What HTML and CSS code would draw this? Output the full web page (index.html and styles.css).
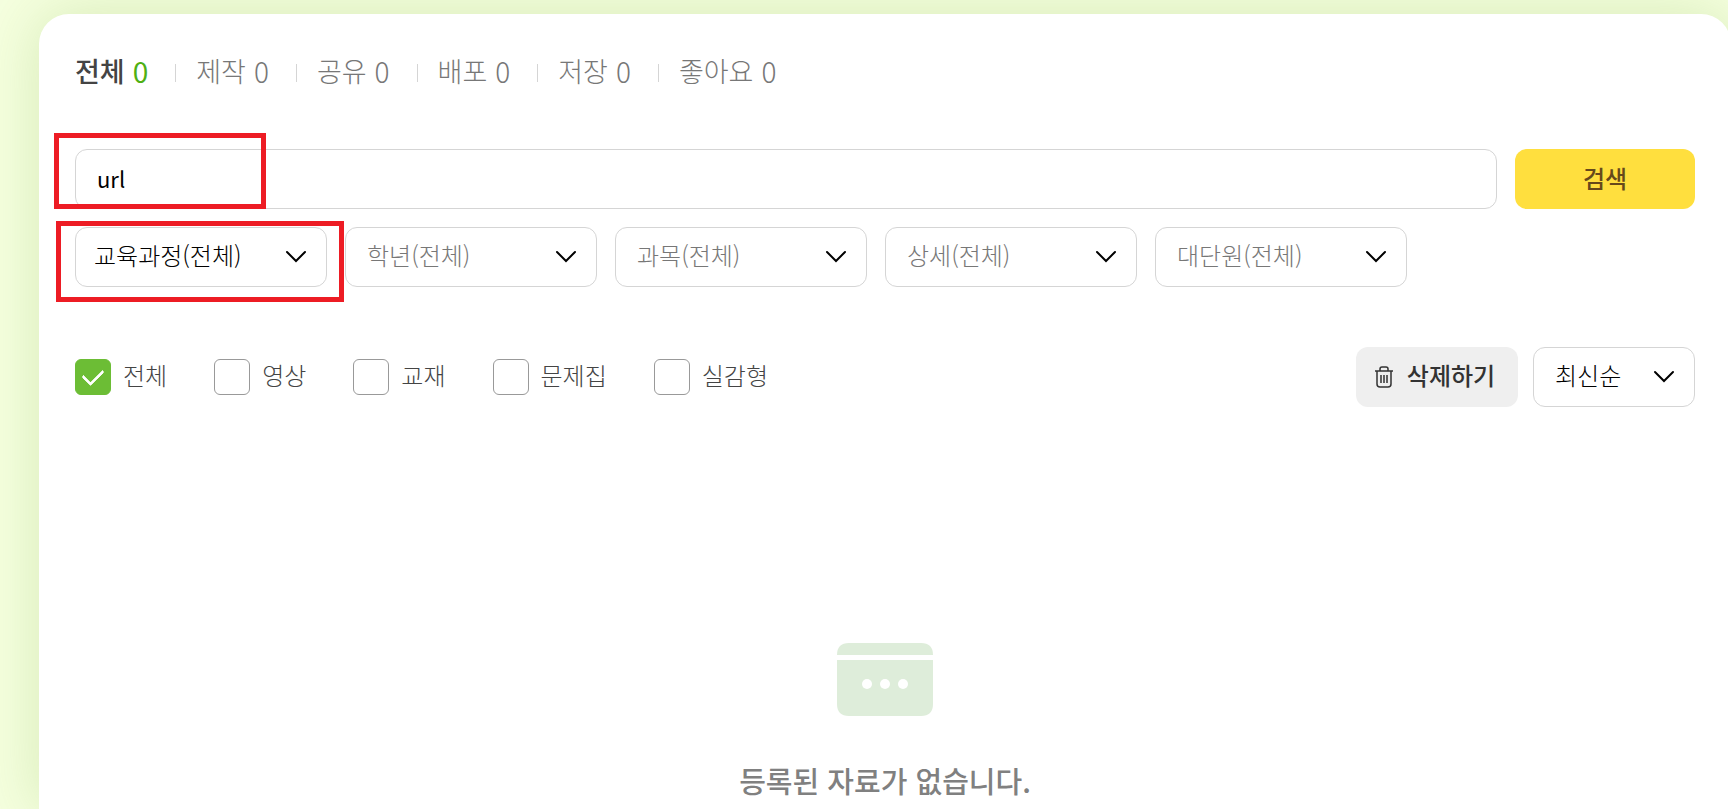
FILE: index.html
```html
<!DOCTYPE html>
<html lang="ko">
<head>
    <meta charset="UTF-8">
    <meta name="viewport" content="width=device-width, initial-scale=1.0">
    <title>자료 보관함</title>
    <link rel="stylesheet" href="styles.css">
</head>
<body>
    <main class="panel">
        <nav class="tabs">
            <a href="#" class="tab active">전체 <span class="count">0</span></a>
            <a href="#" class="tab">제작 <span class="count">0</span></a>
            <a href="#" class="tab">공유 <span class="count">0</span></a>
            <a href="#" class="tab">배포 <span class="count">0</span></a>
            <a href="#" class="tab">저장 <span class="count">0</span></a>
            <a href="#" class="tab">좋아요 <span class="count">0</span></a>
        </nav>

        <form class="search">
            <input type="text" class="search-input" value="url" aria-label="검색어">
            <button type="button" class="btn btn-search">검색</button>
            <span class="mark mark-keyword"></span>
        </form>

        <div class="filters">
            <div class="select-box current">
                <select aria-label="교육과정"><option>교육과정(전체)</option></select>
                <svg class="arrow" viewBox="0 0 22 14"><path d="M2 2l9 9 9-9"/></svg>
            </div>
            <div class="select-box">
                <select aria-label="학년"><option>학년(전체)</option></select>
                <svg class="arrow" viewBox="0 0 22 14"><path d="M2 2l9 9 9-9"/></svg>
            </div>
            <div class="select-box">
                <select aria-label="과목"><option>과목(전체)</option></select>
                <svg class="arrow" viewBox="0 0 22 14"><path d="M2 2l9 9 9-9"/></svg>
            </div>
            <div class="select-box">
                <select aria-label="상세"><option>상세(전체)</option></select>
                <svg class="arrow" viewBox="0 0 22 14"><path d="M2 2l9 9 9-9"/></svg>
            </div>
            <div class="select-box">
                <select aria-label="대단원"><option>대단원(전체)</option></select>
                <svg class="arrow" viewBox="0 0 22 14"><path d="M2 2l9 9 9-9"/></svg>
            </div>
            <span class="mark mark-course"></span>
        </div>

        <div class="toolbar">
            <div class="checks">
                <label class="check"><input type="checkbox" checked><span>전체</span></label>
                <label class="check"><input type="checkbox"><span>영상</span></label>
                <label class="check"><input type="checkbox"><span>교재</span></label>
                <label class="check"><input type="checkbox"><span>문제집</span></label>
                <label class="check"><input type="checkbox"><span>실감형</span></label>
            </div>
            <div class="actions">
                <button type="button" class="btn btn-delete">
                    <svg class="trash" viewBox="0 0 18 22">
                        <path d="M0 5h18M5 5V3q0-2 2-2h4q2 0 2 2v2M2 5v13q0 3 3 3h8q3 0 3-3V5M6 9v8M9 9v8M12 9v8"/>
                    </svg>
                    <span>삭제하기</span>
                </button>
                <div class="select-box current sort">
                    <select aria-label="정렬"><option>최신순</option></select>
                    <svg class="arrow" viewBox="0 0 22 14"><path d="M2 2l9 9 9-9"/></svg>
                </div>
            </div>
        </div>

        <div class="empty">
            <svg class="empty-icon" viewBox="0 0 96 73">
                <path class="shape" d="M0 12Q0 0 12 0h72q12 0 12 12zM0 17h96v44q0 12-12 12H12Q0 73 0 61z"/>
                <circle cx="30" cy="41" r="5"/>
                <circle cx="48" cy="41" r="5"/>
                <circle cx="66" cy="41" r="5"/>
            </svg>
            <p>등록된 자료가 없습니다.</p>
        </div>
    </main>
</body>
</html>
```

FILE: styles.css
```css
* {
    box-sizing: border-box;
}
body {
    margin: 0;
    background: #f5ffdf;
    color: #444;
    font-family: "Noto Sans CJK KR", "Noto Sans", sans-serif;
    font-size: 24px;
    font-weight: 300;
    overflow-x: hidden;
}
input, select, button {
    font: inherit;
}
.panel {
    min-height: calc(100vh - 14px);
    margin: 14px -3px 0 39px;
    padding: 34px 36px 0;
    background: #fff;
    border-radius: 30px 30px 0 0;
    box-shadow: 0 0 60px rgba(110, 160, 40, 0.22);
}

/* tabs */
.tabs {
    display: flex;
    line-height: 46px;
    margin-bottom: 55px;
}
.tab {
    display: flex;
    align-items: center;
    gap: 8px;
    color: #777;
    font-size: 27px;
    text-decoration: none;
}
.tab + .tab::before {
    content: "";
    width: 1px;
    height: 18px;
    margin: 4px 12px 0 27px;
    background: #d5d5d5;
}
.tab.active {
    color: #444;
    font-weight: 500;
}
.tab .count {
    font-size: 28px;
}
.tab.active .count {
    color: #4fb013;
    font-weight: 400;
}

/* search */
.search {
    display: flex;
    gap: 18px;
    position: relative;
    margin-bottom: 18px;
}
.search-input {
    flex: 1;
    height: 60px;
    padding: 0 21px 2px;
    border: 1px solid #d5d5d5;
    border-radius: 12px;
    color: #000;
    font-size: 22px;
    font-weight: 400;
}
.btn {
    height: 60px;
    padding: 0 0 4px;
    border: none;
    border-radius: 12px;
    font-weight: 500;
    cursor: pointer;
}
.btn-search {
    width: 180px;
    background: #ffdf3e;
    color: #66491b;
}

/* filters */
.filters {
    display: flex;
    gap: 18px;
    position: relative;
    margin-bottom: 60px;
}
.select-box {
    position: relative;
    width: 252px;
}
.select-box select {
    appearance: none;
    width: 100%;
    height: 60px;
    padding: 0 50px 6px 21px;
    border: 1px solid #d5d5d5;
    border-radius: 12px;
    background: #fff;
    color: #777;
}
.select-box.current select {
    padding-left: 18px;
    color: #000;
}
.arrow {
    position: absolute;
    top: 23px;
    right: 20px;
    width: 22px;
    height: 14px;
    fill: none;
    stroke: #000;
    stroke-width: 2;
    stroke-linecap: round;
    pointer-events: none;
}

/* highlight frames */
.mark {
    position: absolute;
    border: 5px solid #ed1c24;
    pointer-events: none;
}
.mark-keyword {
    top: -16px;
    left: -21px;
    width: 212px;
    height: 76px;
}
.mark-course {
    top: -6px;
    left: -19px;
    width: 288px;
    height: 81px;
}

/* toolbar */
.toolbar {
    display: flex;
    justify-content: space-between;
    align-items: center;
}
.checks {
    display: flex;
    gap: 47px;
}
.check {
    display: flex;
    align-items: center;
    gap: 12px;
    line-height: 32px;
}
.check span {
    padding-bottom: 4px;
}
.check input {
    appearance: none;
    width: 36px;
    height: 36px;
    margin: 0;
    border: 1px solid #999;
    border-radius: 6px;
    background: #fff;
}
.check input:checked {
    display: grid;
    place-items: center;
    border-color: #6cbd35;
    background: #6cbd35;
}
.check input:checked::after {
    content: "";
    width: 17px;
    height: 10px;
    margin-bottom: 6px;
    border: solid #fff;
    border-width: 0 0 3px 3px;
    border-radius: 2px;
    transform: rotate(-45deg);
}
.actions {
    display: flex;
    gap: 15px;
}
.btn-delete {
    display: flex;
    align-items: center;
    justify-content: center;
    gap: 14px;
    width: 162px;
    padding: 0 4px 0 0;
    background: #efefef;
    color: #333;
}
.btn-delete span {
    padding-bottom: 6px;
}
.trash {
    width: 18px;
    height: 22px;
    fill: none;
    stroke: #333;
    stroke-width: 1.5;
}
.select-box.sort {
    width: 162px;
}
.select-box.sort select {
    padding-left: 21px;
}

/* empty list */
.empty {
    display: flex;
    flex-direction: column;
    align-items: center;
    padding-top: 236px;
    color: #808080;
    font-size: 29px;
    font-weight: 500;
}
.empty p {
    margin: 42px 0 0;
    line-height: 44px;
}
.empty-icon {
    width: 96px;
    height: 73px;
    fill: #fff;
}
.empty-icon .shape {
    fill: #deedda;
}
```
